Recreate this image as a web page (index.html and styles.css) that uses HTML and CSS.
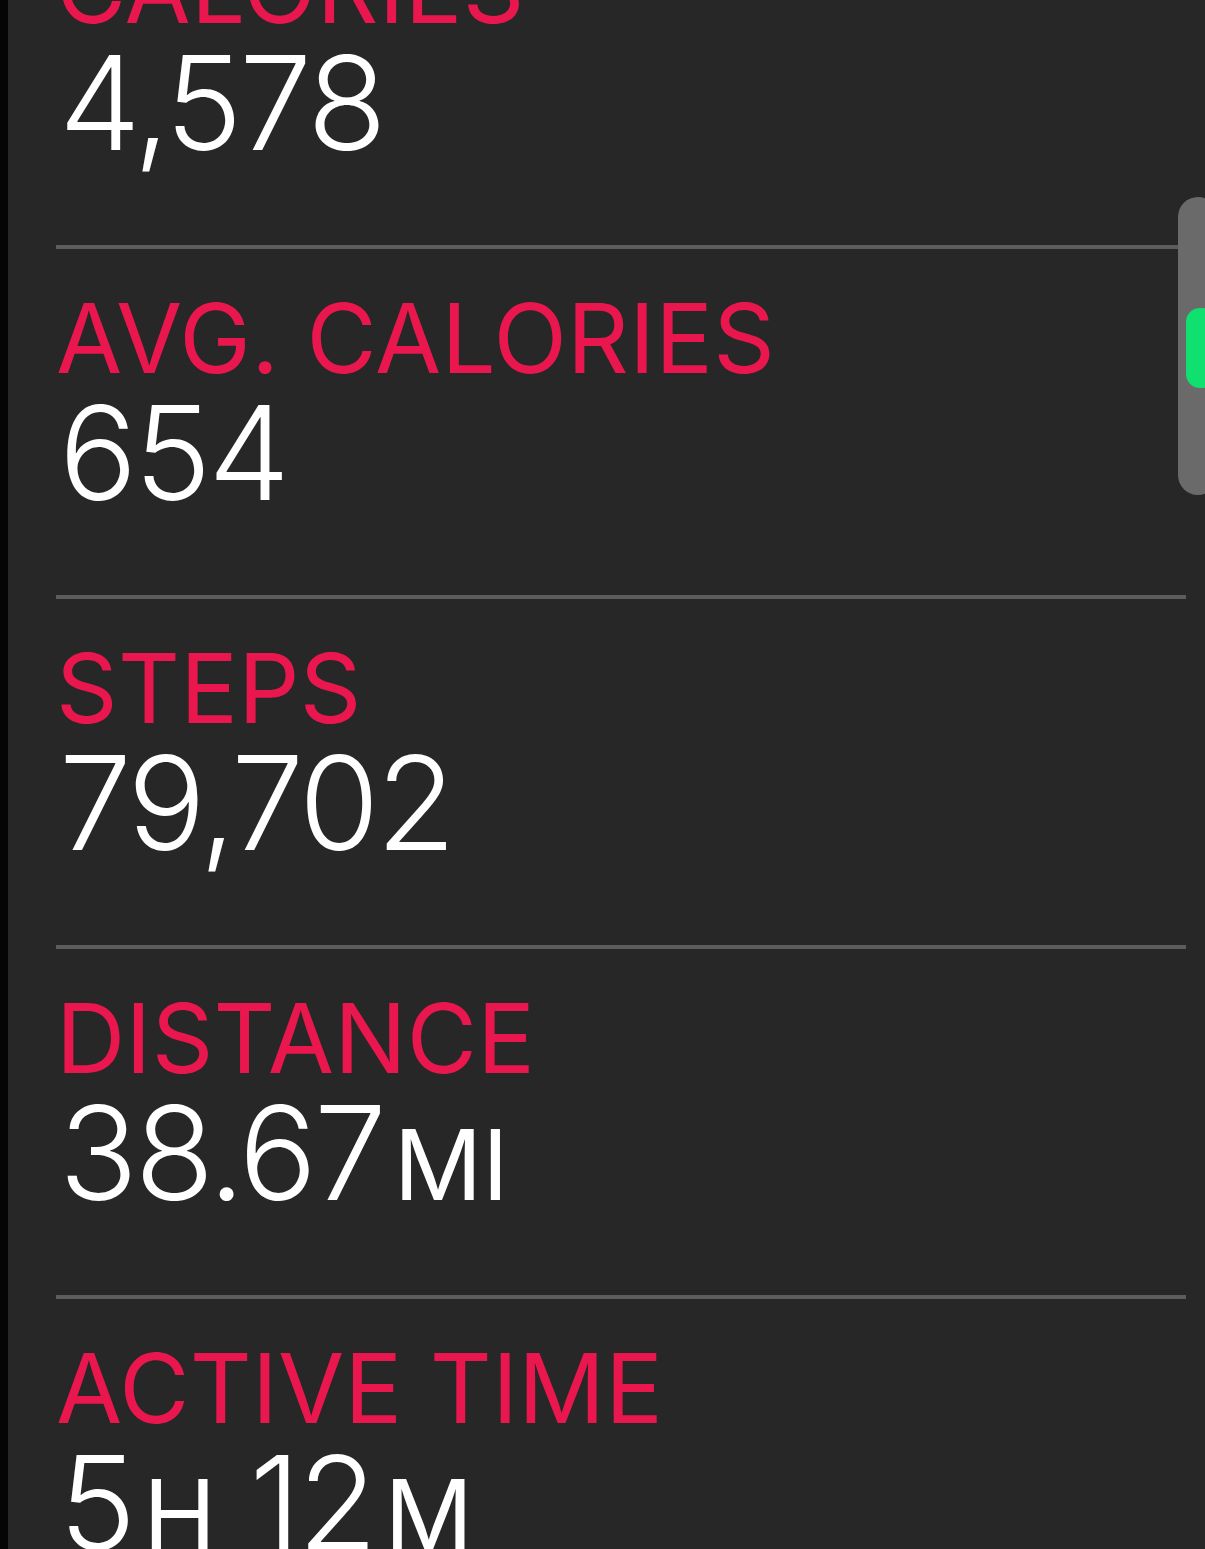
FILE: index.html
```html
<!DOCTYPE html>
<html lang="en">
<head>
    <meta charset="UTF-8">
    <meta name="viewport" content="width=device-width, initial-scale=1.0">
    <title>Activity Summary</title>
    <link rel="stylesheet" href="styles.css">
</head>
<body>
    <div class="layar">
        <div class="daftar">
            <div class="baris">
                <div class="judul">CALORIES</div>
                <div class="nilai">4,578</div>
            </div>
            <div class="baris">
                <div class="judul">AVG. CALORIES</div>
                <div class="nilai">654</div>
            </div>
            <div class="baris">
                <div class="judul">STEPS</div>
                <div class="nilai">79,702</div>
            </div>
            <div class="baris">
                <div class="judul">DISTANCE</div>
                <div class="nilai">38.67<span class="satuan">MI</span></div>
            </div>
            <div class="baris">
                <div class="judul">ACTIVE TIME</div>
                <div class="nilai">5<span class="satuan">H</span> 12<span class="satuan">M</span></div>
            </div>
        </div>

        <!-- scroll indicator -->
        <div class="gulir">
            <div class="gulir-jempol"></div>
        </div>
    </div>
</body>
</html>
```

FILE: styles.css
```css
body {
    margin: 0;
    background-color: #050505;
    font-family: Inter, "Noto Sans", sans-serif;
}

.layar {
    position: relative;
    margin-left: 8px;
    height: 1549px;
    background-color: #272727;
    overflow: hidden;
}

.daftar {
    margin-top: -105px;
    padding: 0 19px 0 48px;
}

.baris {
    box-sizing: border-box;
    height: 350px;
    padding-top: 41px;
    border-top: 4px solid #5c5c5c;
}

.judul {
    font-size: 96px;
    line-height: 97px;
    color: #e9174d;
    letter-spacing: 0.3px;
}

.nilai {
    margin-top: 1px;
    padding-left: 3px;
    font-size: 130px;
    font-weight: 300;
    line-height: 130px;
    color: #ffffff;
    letter-spacing: -3px;
}

.satuan {
    font-size: 98px;
    font-weight: 400;
    letter-spacing: 0;
    margin-left: 10px;
}

.gulir {
    position: absolute;
    left: 1170px;
    top: 197px;
    width: 40px;
    height: 298px;
    border-radius: 20px;
    background-color: #6a6a6a;
}

.gulir-jempol {
    position: absolute;
    left: 8px;
    top: 111px;
    width: 30px;
    height: 80px;
    border-radius: 14px;
    background-color: #0fe06f;
}
```
